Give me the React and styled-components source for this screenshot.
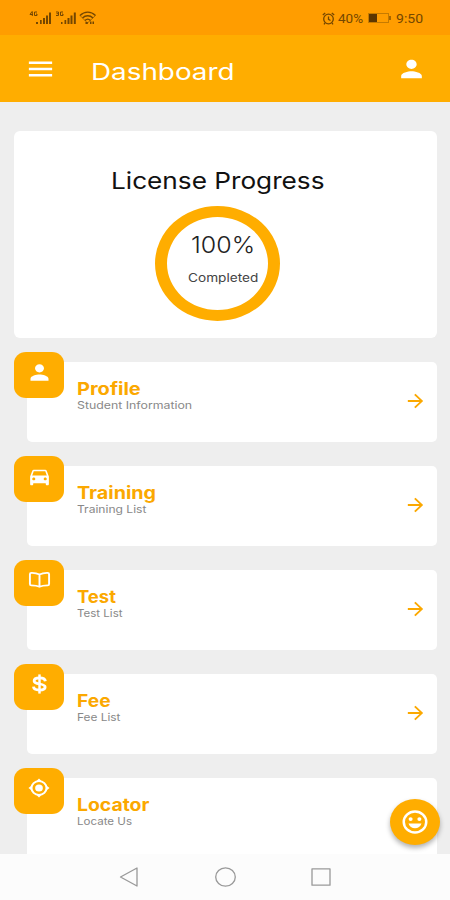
import { useLayoutEffect, useRef } from 'react';
import styled, { createGlobalStyle } from 'styled-components';
import { MdArrowForward, MdDirectionsCar, MdMenu, MdPerson } from 'react-icons/md';

const GlobalStyle = createGlobalStyle`
  * {
    box-sizing: border-box;
  }

  body {
    margin: 0;
    font-family: Inter, "Open Sans", sans-serif;
  }
`;

const BookIcon = (props) => (
  <svg viewBox="0 0 24 24" fill="none" stroke="currentColor" strokeWidth="2" strokeLinejoin="round" {...props}>
    <path d="M12 5.500C9.500 4 6.500 3.400 3.500 3.500Q2 3.600 2 5v11.800Q2 18.500 3.500 18.500c3 0 6 .3 8.500 1.700 2.500-1.400 5.500-1.700 8.500-1.700Q22 18.500 22 16.800V5Q22 3.600 20.500 3.500C17.500 3.400 14.500 4 12 5.500zM12 5.500V20" />
  </svg>
);

const DollarIcon = (props) => (
  <svg viewBox="0 0 24 24" fill="none" stroke="currentColor" {...props}>
    <path
      strokeWidth="3.3"
      d="M18.700 8.600C18.300 6 15.500 4.700 12 4.700S5.900 6 5.900 8.400c0 5 12.500 2.200 12.500 7.200 0 2.400-2.900 3.700-6.400 3.700s-6.600-1.400-6.900-4.100"
    />
    <path strokeWidth="2.800" d="M12 .5v23" />
  </svg>
);

const LocateIcon = (props) => (
  <svg viewBox="0 0 24 24" fill="currentColor" {...props}>
    <circle cx="12" cy="12" r="8.2" fill="none" stroke="currentColor" strokeWidth="2.200" />
    <circle cx="12" cy="12" r="4.2" />
    <path d="M12 .5l3 3.500H9zM12 23.500l3-3.500H9zM.5 12L4 9v6zM23.500 12L20 9v6z" />
  </svg>
);

const SmileIcon = (props) => (
  <svg viewBox="0 0 24 24" fill="currentColor" {...props}>
    <circle cx="12" cy="12" r="9" fill="none" stroke="currentColor" strokeWidth="2" />
    <circle cx="8.500" cy="9.500" r="1.600" />
    <circle cx="15.500" cy="9.500" r="1.600" />
    <path d="M6.800 13.300h10.400c-.7 2.500-2.800 4.100-5.200 4.100s-4.500-1.600-5.200-4.100z" />
  </svg>
);

const items = [
  { title: 'Profile', width: 64, sub: 'Student Information', subWidth: 115, icon: MdPerson, w: 27, h: 25, top: 8 },
  { title: 'Training', width: 79, sub: 'Training List', subWidth: 69, icon: MdDirectionsCar, w: 25, h: 23, top: 9 },
  { title: 'Test', width: 39, sub: 'Test List', subWidth: 45, icon: BookIcon, w: 23, h: 20, top: 10 },
  { title: 'Fee', width: 34, sub: 'Fee List', subWidth: 43, icon: DollarIcon, w: 21, h: 20, top: 10 },
  { title: 'Locator', width: 72, sub: 'Locate Us', subWidth: 55, icon: LocateIcon, w: 22, h: 20, top: 10 },
];

// stretches a line of text to the given width
const Wide = ({ width, children }) => {
  const ref = useRef(null);

  useLayoutEffect(() => {
    const el = ref.current;
    el.style.transform = `scaleX(${width / el.offsetWidth})`;
  }, [width]);

  return (
    <WideBox $width={width}>
      <WideText ref={ref}>{children}</WideText>
    </WideBox>
  );
};

const App = () => {
  return (
    <Screen>
      <GlobalStyle />
      <StatusBar>
        <Signals>
          <SignalIcons viewBox="0 0 68 16">
            <g fill="none" stroke="currentColor" strokeWidth="1">
              <path d="M3 1.500L1 4.500H4M3.300 1.500V6M8 2H5.500V5.500H8V4H7" />
              <path d="M27 2h2.500v3.500H27M27.500 3.700h2M34 2h-2.500v3.500H34V4h-1" />
              <path d="M51 5.500c4.500-4.500 11-4.500 15.500 0M53.500 8c3-3 7.500-3 10.500 0M56 10.500c2-2 3.500-2 5.500 0" strokeWidth="1.400" />
              <path d="M51 5.500L58.500 13 66.500 5.500" strokeWidth=".6" />
            </g>
            <g fill="currentColor">
              <path d="M7 12h2v2H7zM11 10h1.700v4H11zM14 8h2v6h-2zM17 5.500h2V14h-2zM20 2.500h2V14h-2z" />
              <path d="M32 12h1.500v2H32zM35.500 10h1.700v4h-1.700zM38.500 8h2v6h-2zM41.500 5.500h2V14h-2zM44.800 2.500h2V14h-2z" />
              <path d="M56.500 12h2.300v2h-2.300zM61 11.500h1.500V14H61zM63.500 11.500H65V14h-1.500z" />
            </g>
          </SignalIcons>
        </Signals>
        <StatusInfo>
          <AlarmIcon viewBox="0 0 13 13">
            <circle cx="6.500" cy="7" r="4.800" />
            <path d="M6.500 4.500V7.300L8.500 8.500M.8 3L3.200 1M12.200 3L9.800 1M3 11L2 12.300M10 11l1 1.300" />
          </AlarmIcon>
          <Wide width={25}>40%</Wide>
          <Battery>
            <BatteryLevel />
          </Battery>
          <Wide width={27}>9:50</Wide>
        </StatusInfo>
      </StatusBar>
      <Header>
        <Icon as={MdMenu} $w={31} $h={30} preserveAspectRatio="none" />
        <HeaderTitle>
          <Wide width={144}>Dashboard</Wide>
        </HeaderTitle>
        <Icon as={MdPerson} $w={31} $h={28} preserveAspectRatio="none" />
      </Header>
      <Content>
        <ProgressCard>
          <ProgressTitle>
            <Wide width={214}>License Progress</Wide>
          </ProgressTitle>
          <Ring>
            <Percent>
              <Wide width={64}>100%</Wide>
            </Percent>
            <Completed>
              <Wide width={70}>Completed</Wide>
            </Completed>
          </Ring>
        </ProgressCard>
        {items.map((item) => (
          <Row key={item.title}>
            <Badge $top={item.top}>
              <Icon as={item.icon} $w={item.w} $h={item.h} preserveAspectRatio="none" />
            </Badge>
            <Labels>
              <Title>
                <Wide width={item.width}>{item.title}</Wide>
              </Title>
              <Subtitle>
                <Wide width={item.subWidth}>{item.sub}</Wide>
              </Subtitle>
            </Labels>
            <Icon as={MdArrowForward} $w={23} $h={22} preserveAspectRatio="none" />
          </Row>
        ))}
      </Content>
      <Fab>
        <Icon as={SmileIcon} $w={30} $h={28} preserveAspectRatio="none" />
      </Fab>
      <NavBar>
        <NavIcon viewBox="0 0 22 22">
          <path d="M2.500 11L19 2v18z" />
        </NavIcon>
        <NavIcon viewBox="0 0 22 22">
          <ellipse cx="11.500" cy="11" rx="9.800" ry="9.200" />
        </NavIcon>
        <NavIcon viewBox="0 0 22 22">
          <rect x="2" y="2.800" width="18" height="16.400" />
        </NavIcon>
      </NavBar>
    </Screen>
  );
};

const Screen = styled.div`
  position: relative;
  display: flex;
  flex-direction: column;
  width: 450px;
  height: 900px;
  overflow: hidden;
  background: #eeeeee;
`;

const WideBox = styled.span`
  display: block;
  width: ${(props) => props.$width}px;
  white-space: nowrap;
`;

const WideText = styled.span`
  display: inline-block;
  transform-origin: left center;
`;

const Icon = styled.svg`
  display: block;
  flex: none;
  width: ${(props) => props.$w}px;
  height: ${(props) => props.$h}px;
`;

const StatusBar = styled.div`
  display: flex;
  flex: none;
  align-items: center;
  justify-content: space-between;
  height: 35px;
  padding: 1px 27px 0 29px;
  background: #ff9d00;
  color: #744700;
`;

const Signals = styled.div`
  display: flex;
`;

const SignalIcons = styled.svg`
  width: 68px;
  height: 16px;
`;

const StatusInfo = styled.div`
  display: flex;
  align-items: center;
  font-family: Roboto, sans-serif;
  font-size: 13.5px;
  line-height: 16px;
`;

const AlarmIcon = styled.svg`
  width: 13px;
  height: 13px;
  margin-right: 3px;
  fill: none;
  stroke: currentColor;
  stroke-width: 1.3;
`;

const Battery = styled.div`
  position: relative;
  width: 21px;
  height: 10px;
  margin: 0 7px 0 5px;
  border: 1px solid #c67b00;

  &::after {
    content: '';
    position: absolute;
    top: 2px;
    right: -3px;
    width: 2px;
    height: 4px;
    background: #a56500;
  }
`;

const BatteryLevel = styled.div`
  width: 8px;
  height: 8px;
  background: #5d3600;
`;

const Header = styled.header`
  display: flex;
  flex: none;
  align-items: center;
  height: 67px;
  padding: 0 23px 0 25px;
  background: #ffad00;
  color: #fff;
`;

const HeaderTitle = styled.div`
  flex: 1;
  padding: 6px 0 0 35px;
  font-size: 23px;
  line-height: 28px;
`;

const Content = styled.main`
  flex: 1;
  min-height: 0;
  padding: 29px 13px 0 14px;
  overflow: hidden;
`;

const ProgressCard = styled.section`
  display: flex;
  flex-direction: column;
  align-items: center;
  height: 207px;
  padding: 36px 16px 0 0;
  border-radius: 6px;
  background: #fff;
`;

const ProgressTitle = styled.div`
  color: #111;
  font-size: 23px;
  line-height: 28px;
`;

const Ring = styled.div`
  display: flex;
  flex-direction: column;
  align-items: center;
  width: 125px;
  height: 115px;
  margin-top: 11px;
  padding: 14px 0 0 10px;
  border: solid #ffad00;
  border-width: 11.5px 12.5px;
  border-radius: 50%;
`;

const Percent = styled.div`
  color: #222;
  font-size: 23px;
  font-weight: 300;
  line-height: 28px;
`;

const Completed = styled.div`
  margin-top: 11px;
  color: #444;
  font-size: 11.5px;
  line-height: 16px;
`;

const Row = styled.section`
  position: relative;
  display: flex;
  justify-content: space-between;
  align-items: center;
  height: 80px;
  margin: 24px 0 0 13px;
  padding: 0 10px 2px 50px;
  border-radius: 5px;
  background: #fff;
  color: #fba800;
`;

const Badge = styled.div`
  position: absolute;
  top: -10px;
  left: -13px;
  display: flex;
  justify-content: center;
  align-items: flex-start;
  width: 50px;
  height: 46px;
  padding-top: ${(props) => props.$top}px;
  border-radius: 12px / 11px;
  background: #ffad00;
  color: #fff;
`;

const Labels = styled.div`
  align-self: flex-start;
  padding-top: 16px;
`;

const Title = styled.div`
  font-size: 17.5px;
  font-weight: 700;
  line-height: 21px;
`;

const Subtitle = styled.div`
  color: #888;
  font-size: 10.5px;
  line-height: 13px;
`;

const Fab = styled.button`
  position: absolute;
  right: 10px;
  bottom: 55px;
  display: flex;
  justify-content: center;
  align-items: center;
  width: 50px;
  height: 46px;
  padding: 0;
  border: 0;
  border-radius: 50%;
  background: #ffad00;
  box-shadow: 0 3px 5px rgba(0, 0, 0, 0.3);
  color: #fff;
`;

const NavBar = styled.nav`
  display: flex;
  flex: none;
  justify-content: space-between;
  align-items: center;
  height: 46px;
  padding: 0 118px;
  background: #fcfcfc;
`;

const NavIcon = styled.svg`
  width: 22px;
  height: 22px;
  fill: none;
  stroke: #999;
  stroke-width: 1.3;
  stroke-linejoin: round;
`;

export default App;
